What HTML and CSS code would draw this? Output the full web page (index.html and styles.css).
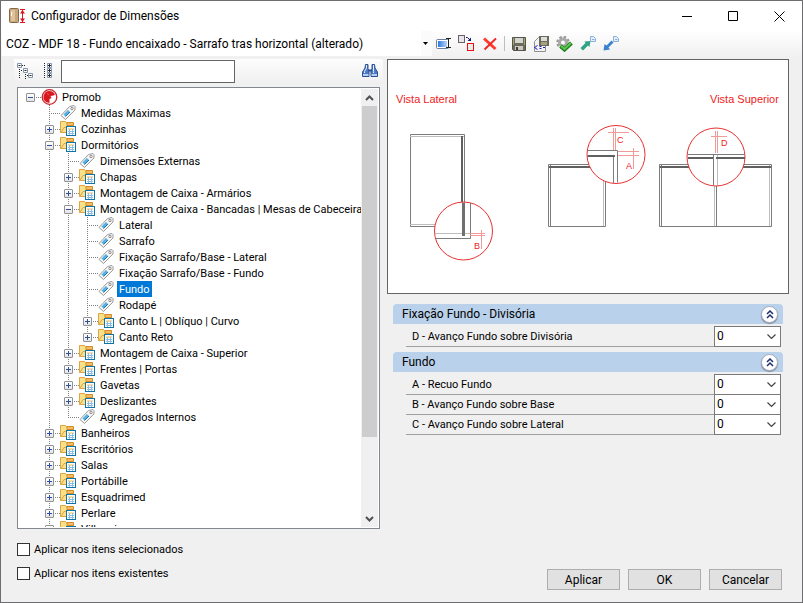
FILE: index.html
```html
<!DOCTYPE html>
<html lang="pt-BR">
<head>
  <meta charset="UTF-8">
  <title>Configurador de Dimensões</title>
  <link rel="stylesheet" href="styles.css">
</head>
<body>
  <svg class="sprites" aria-hidden="true">
    <symbol id="i-folder" viewBox="0 0 17 16">
      <path d="M0.500 11.500V0.500H5.500L7 2.500H13.500V11.500Z" fill="#fbe08a" stroke="#dca545"/>
      <path d="M7 1.500H13.500V4.500H7Z" fill="#f3bd62" stroke="#d08c2c"/>
      <path d="M1 11.500L4 6.500H8" fill="none" stroke="#dca545"/>
      <rect x="6.500" y="5.500" width="9" height="9" fill="#fff" stroke="#0f75a8"/>
      <path d="M8 8H14" stroke="#f5b95a"/>
      <path d="M8 10.500H14M8 12.500H14M9.500 8V14M12.500 8V14" stroke="#8dbce4"/>
    </symbol>
    <symbol id="i-tag" viewBox="0 0 17 16">
      <path d="M1 10.500L9.500 1.500L14 0.500L15 1.500V5L5.500 14.500Z" fill="#f6f6f6" stroke="#9a9a9a"/>
      <path d="M4.500 10.500L9 6" stroke="#56b0e4" stroke-width="3"/>
      <path d="M5.500 11.500L10 7" stroke="#1c78b4"/>
      <circle cx="12" cy="3.500" r="1.200" fill="#fff" stroke="#8a8a8a"/>
    </symbol>
    <symbol id="i-promob" viewBox="0 0 17 16">
      <circle cx="8.500" cy="8" r="7.300" fill="#fff" stroke="#cf1f28" stroke-width="1.300"/>
      <path d="M8.500 2A6 6 0 0 0 5.500 13.200L8.500 14V10L10.500 9L9.500 7L12.500 6.500L14 5.500A6 6 0 0 0 8.500 2Z" fill="#d71921"/>
      <path d="M6.500 4.500L7.500 6" fill="none" stroke="#ec6b70"/>
    </symbol>
  </svg>

  <div class="window">
    <header class="titlebar">
      <svg class="app-icon" width="17" height="16" viewBox="0 0 17 16" aria-hidden="true">
        <rect x="0.500" y="0.500" width="9" height="14" rx="1" fill="#c9a57a" stroke="#84684a"/>
        <rect x="2" y="2" width="4" height="11" fill="#dfc39d"/>
        <path d="M2.500 4V8" stroke="#fff"/>
        <path d="M11 1.500H16M11 14.500H16M13.500 2V14" stroke="#d8141c"/>
        <path d="M13.500 2L16 5.500H11ZM13.500 14L16 10.500H11Z" fill="#d8141c"/>
      </svg>
      <h1>Configurador de Dimensões</h1>
      <button class="win-btn" aria-label="Minimizar"><svg width="11" height="11"><path d="M0 5.500H10"/></svg></button>
      <button class="win-btn" aria-label="Maximizar"><svg width="11" height="11"><path d="M0.500 0.500H9.500V9.500H0.500Z"/></svg></button>
      <button class="win-btn" aria-label="Fechar"><svg width="11" height="11"><path d="M0.500 0.500L10.500 10.500M10.500 0.500L0.500 10.500"/></svg></button>
    </header>

    <div class="toolbar">
      <select class="config-select" aria-label="Configuração">
        <option>COZ - MDF 18 - Fundo encaixado - Sarrafo tras horizontal (alterado)</option>
      </select>
      <button class="tool" aria-label="Renomear">
        <svg width="16" height="16">
          <defs><linearGradient id="g-blue"><stop offset="0" stop-color="#2f77e0"/><stop offset="1" stop-color="#b9d4fb"/></linearGradient></defs>
          <rect x="0.500" y="3.500" width="12" height="9" rx="1" fill="#fff" stroke="#6c7f9c"/>
          <rect x="2" y="5" width="9" height="6" fill="url(#g-blue)"/>
          <path d="M10 2.500H15M10 11.500H15M12.500 3V11" stroke="#222" fill="none"/>
        </svg>
      </button>
      <button class="tool" aria-label="Duplicar">
        <svg width="17" height="17">
          <rect x="0.500" y="0.500" width="6" height="7" fill="#e6e6ec" stroke="#6d5f66"/>
          <path d="M8 2.500H9.500L12 5" stroke="#14206e" fill="none"/>
          <path d="M13 2.500V6H9.500Z" fill="#14206e"/>
          <rect x="9.500" y="8.500" width="6" height="7" fill="#e8ecec" stroke="#f00d12"/>
        </svg>
      </button>
      <button class="tool" aria-label="Excluir">
        <svg width="16" height="16"><path d="M2 2.500L13.500 13" stroke="#ff3b30" stroke-width="3"/><path d="M14 2.500L2.500 13.500" stroke="#ee2a24" stroke-width="2"/></svg>
      </button>
      <span class="separator"></span>
      <button class="tool" aria-label="Salvar">
        <svg width="16" height="16">
          <path d="M1.500 1.500H14.500V14.500H2.500L1.500 13.500Z" fill="#6c6a5c" stroke="#55544a"/>
          <rect x="4" y="2" width="8" height="5" fill="#d3d7d0"/>
          <path d="M2.500 2V9M13.500 2V9" stroke="#aaa46c"/>
          <rect x="4" y="10" width="8" height="4" fill="#c9c9c1"/>
          <rect x="5" y="11" width="2" height="3" fill="#3c3b35"/>
        </svg>
      </button>
      <button class="tool" aria-label="Salvar como">
        <svg width="17" height="16">
          <path d="M1.500 15.500V5.500L5.500 1.500H12.500V15.500Z" fill="#f4f4f4" stroke="#8f8f8f"/>
          <rect x="6" y="0" width="10" height="10" fill="#6c6a5c"/>
          <rect x="8" y="1" width="6" height="4" fill="#dcdfd8"/>
          <rect x="8" y="6" width="6" height="3" fill="#a7a37c"/>
          <path d="M4.500 9.500L1.500 11.500L4.500 13.500M6.500 10.500H8.500M6.500 12.500H8.500M10 11.500H12" fill="none" stroke="#1a1ad0"/>
        </svg>
      </button>
      <button class="tool" aria-label="Validar">
        <svg width="17" height="16">
          <circle cx="7" cy="6.500" r="5.500" fill="none" stroke="#979797" stroke-width="2.400" stroke-dasharray="2.400 1.920"/>
          <circle cx="7" cy="6.500" r="3.500" fill="#fff" stroke="#a9a9a9" stroke-width="3"/>
          <path d="M4.500 10L8.500 13.500L15.500 7" fill="none" stroke="#227a22" stroke-width="4"/>
          <path d="M5 10L8.500 13L15 7" fill="none" stroke="#58cd48" stroke-width="2"/>
        </svg>
      </button>
      <button class="tool" aria-label="Exportar">
        <svg width="16" height="16">
          <path d="M0.500 12L5.500 7L4.500 5.500L10.500 5L9.500 11L8 9.500L3 14.500Z" fill="#2fa384"/>
          <path d="M10.500 0.500H13.500L15.500 2.500V5.500H10.500Z" fill="#e3effc" stroke="#8ab1dd"/>
          <path d="M12 3.500H14.500" stroke="#8ab1dd"/>
        </svg>
      </button>
      <button class="tool" aria-label="Importar">
        <svg width="16" height="16">
          <path d="M10.500 6.500L5.500 11.500L7 13.500L0.500 14.500L1.500 8L3.500 9.500L8.500 4.500Z" fill="#3a82cf"/>
          <path d="M10.500 0.500H13.500L15.500 2.500V5.500H10.500Z" fill="#e3effc" stroke="#8ab1dd"/>
          <path d="M12 3.500H14.500" stroke="#8ab1dd"/>
        </svg>
      </button>
    </div>

    <main class="content">
      <section class="left">
        <div class="tree-tools">
          <button class="tree-tool" aria-label="Recolher tudo">
            <svg width="16" height="16">
              <path d="M2.500 4V16M8.500 9V16" stroke="#222" stroke-dasharray="1 1"/>
              <path d="M5 2.500H8M4 7.500H6M10 12.500H11" stroke="#222" stroke-dasharray="1 1"/>
              <path d="M0.500 0.500H4.500V4.500H0.500ZM6.500 5.500H10.500V9.500H6.500ZM11.500 10.500H15.500V14.500H11.500Z" fill="#fff" stroke="#8797ab"/>
              <path d="M1.500 2.500H3.500M7.500 7.500H9.500M12.500 12.500H14.500" stroke="#223"/>
            </svg>
          </button>
          <button class="tree-tool" aria-label="Expandir tudo">
            <svg width="10" height="16">
              <path d="M1.500 0V16M6.500 0V16" stroke="#222" stroke-dasharray="1 1"/>
              <path d="M4.500 0.500H8.500V4.500H4.500ZM4.500 5.500H8.500V9.500H4.500ZM4.500 10.500H8.500V14.500H4.500Z" fill="#fff" stroke="#8797ab"/>
              <path d="M5 2.500H8M5 7.500H8M5 12.500H8M6.500 1V4M6.500 6V9M6.500 11V14" stroke="#223"/>
            </svg>
          </button>
          <input type="text" class="search" aria-label="Pesquisar">
          <button class="tree-tool find" aria-label="Localizar">
            <svg width="16" height="14">
              <path d="M3.500 0.500H6V4.500L7 7V12.500H0.500V8L3 4Z" fill="#4f7bc0" stroke="#2c5096"/>
              <path d="M12.500 0.500H10V4.500L9 7V12.500H15.500V8L13 4Z" fill="#4f7bc0" stroke="#2c5096"/>
              <path d="M6.500 6.500H9.500" stroke="#2c5096" stroke-width="2"/>
              <path d="M4.500 1V4L2.500 7.500V9M11.500 1V4L11.500 7.500V9" stroke="#e4effc" fill="none"/>
              <path d="M1 11H6.500M9.500 11H15" stroke="#b4cdf0" stroke-width="2"/>
            </svg>
          </button>
        </div>

        <div class="tree-box">
          <ul class="tree">
            <li>
              <div class="row"><span class="toggle open"></span><svg class="icon root"><use href="#i-promob"/></svg><span class="label">Promob</span></div>
              <ul>
                <li><div class="row"><span class="toggle none"></span><svg class="icon"><use href="#i-tag"/></svg><span class="label">Medidas Máximas</span></div></li>
                <li><div class="row"><span class="toggle"></span><svg class="icon"><use href="#i-folder"/></svg><span class="label">Cozinhas</span></div></li>
                <li>
                  <div class="row"><span class="toggle open"></span><svg class="icon"><use href="#i-folder"/></svg><span class="label">Dormitórios</span></div>
                  <ul>
                    <li><div class="row"><span class="toggle none"></span><svg class="icon"><use href="#i-tag"/></svg><span class="label">Dimensões Externas</span></div></li>
                    <li><div class="row"><span class="toggle"></span><svg class="icon"><use href="#i-folder"/></svg><span class="label">Chapas</span></div></li>
                    <li><div class="row"><span class="toggle"></span><svg class="icon"><use href="#i-folder"/></svg><span class="label">Montagem de Caixa - Armários</span></div></li>
                    <li>
                      <div class="row"><span class="toggle open"></span><svg class="icon"><use href="#i-folder"/></svg><span class="label">Montagem de Caixa - Bancadas | Mesas de Cabeceira</span></div>
                      <ul>
                        <li><div class="row"><span class="toggle none"></span><svg class="icon"><use href="#i-tag"/></svg><span class="label">Lateral</span></div></li>
                        <li><div class="row"><span class="toggle none"></span><svg class="icon"><use href="#i-tag"/></svg><span class="label">Sarrafo</span></div></li>
                        <li><div class="row"><span class="toggle none"></span><svg class="icon"><use href="#i-tag"/></svg><span class="label">Fixação Sarrafo/Base - Lateral</span></div></li>
                        <li><div class="row"><span class="toggle none"></span><svg class="icon"><use href="#i-tag"/></svg><span class="label">Fixação Sarrafo/Base - Fundo</span></div></li>
                        <li><div class="row"><span class="toggle none"></span><svg class="icon"><use href="#i-tag"/></svg><span class="label selected">Fundo</span></div></li>
                        <li><div class="row"><span class="toggle none"></span><svg class="icon"><use href="#i-tag"/></svg><span class="label">Rodapé</span></div></li>
                        <li><div class="row"><span class="toggle"></span><svg class="icon"><use href="#i-folder"/></svg><span class="label">Canto L | Oblíquo | Curvo</span></div></li>
                        <li><div class="row"><span class="toggle"></span><svg class="icon"><use href="#i-folder"/></svg><span class="label">Canto Reto</span></div></li>
                      </ul>
                    </li>
                    <li><div class="row"><span class="toggle"></span><svg class="icon"><use href="#i-folder"/></svg><span class="label">Montagem de Caixa - Superior</span></div></li>
                    <li><div class="row"><span class="toggle"></span><svg class="icon"><use href="#i-folder"/></svg><span class="label">Frentes | Portas</span></div></li>
                    <li><div class="row"><span class="toggle"></span><svg class="icon"><use href="#i-folder"/></svg><span class="label">Gavetas</span></div></li>
                    <li><div class="row"><span class="toggle"></span><svg class="icon"><use href="#i-folder"/></svg><span class="label">Deslizantes</span></div></li>
                    <li><div class="row"><span class="toggle none"></span><svg class="icon"><use href="#i-tag"/></svg><span class="label">Agregados Internos</span></div></li>
                  </ul>
                </li>
                <li><div class="row"><span class="toggle"></span><svg class="icon"><use href="#i-folder"/></svg><span class="label">Banheiros</span></div></li>
                <li><div class="row"><span class="toggle"></span><svg class="icon"><use href="#i-folder"/></svg><span class="label">Escritórios</span></div></li>
                <li><div class="row"><span class="toggle"></span><svg class="icon"><use href="#i-folder"/></svg><span class="label">Salas</span></div></li>
                <li><div class="row"><span class="toggle"></span><svg class="icon"><use href="#i-folder"/></svg><span class="label">Portábille</span></div></li>
                <li><div class="row"><span class="toggle"></span><svg class="icon"><use href="#i-folder"/></svg><span class="label">Esquadrimed</span></div></li>
                <li><div class="row"><span class="toggle"></span><svg class="icon"><use href="#i-folder"/></svg><span class="label">Perlare</span></div></li>
                <li><div class="row"><span class="toggle"></span><svg class="icon"><use href="#i-folder"/></svg><span class="label">Villaggio</span></div></li>
              </ul>
            </li>
          </ul>
          <div class="scrollbar">
            <button class="scroll-btn" aria-label="Rolar para cima"><svg width="9" height="6"><path d="M1 5L4.500 1.500L8 5"/></svg></button>
            <div class="track"><div class="thumb"></div></div>
            <button class="scroll-btn" aria-label="Rolar para baixo"><svg width="9" height="6"><path d="M1 1L4.500 4.500L8 1"/></svg></button>
          </div>
        </div>
      </section>

      <section class="right">
        <div class="preview">
          <svg viewBox="0 0 400 233" role="img" aria-label="Vista lateral e superior">
            <g class="caption">
              <text x="8" y="43">Vista Lateral</text>
              <text x="322" y="43">Vista Superior</text>
            </g>

            <!-- vista lateral -->
            <path class="body" d="M22.500 74.500H76.500V166.500H22.500Z"/>
            <path class="thin" d="M22 76.500H76M22 164.500H76"/>
            <path class="panel" d="M74 76V142"/>
            <circle class="lens" cx="75.500" cy="171" r="29"/>
            <path class="thin" d="M47 173.500H82"/>
            <path class="body" d="M48 178.500H82.500V143"/>
            <path class="panel wide" d="M75.500 142.500V176"/>
            <path class="mark" d="M82 173.500H97M82 175.500H97M93.500 170V189"/>
            <text class="letter" x="86" y="189">B</text>

            <!-- vista superior, lateral -->
            <path class="body" d="M160.500 104.500H217.500V166.500H160.500ZM162.500 105V166"/>
            <path class="thin" d="M215.500 105V166"/>
            <path class="panel" d="M161 107H215"/>
            <circle class="lens" cx="228" cy="94.500" r="29"/>
            <path class="body" d="M200 90.500H229.500V122.500M225.500 97V123"/>
            <path class="panel" d="M199.500 96H227"/>
            <path class="mark" d="M225.500 68V90M227.500 68V90M220 72.500H241M230 91.500H251M230 95.500H251M245.500 88V109"/>
            <text class="letter" x="229" y="83">C</text>
            <text class="letter" x="238" y="109">A</text>

            <!-- vista superior, divisória -->
            <path class="body" d="M271.500 104.500H383.500V166.500H271.500ZM273.500 105V166M328.500 126V166"/>
            <path class="thin" d="M326.500 126V166M381.500 105V166"/>
            <path class="panel" d="M272 107H383"/>
            <circle class="lens" cx="328" cy="97" r="29"/>
            <path class="body" d="M300 94.500H356M325.500 95V125"/>
            <path class="thin" d="M329.500 95V125"/>
            <path class="panel" d="M300 98H325M328 98H357"/>
            <path class="mark" d="M327.500 71V93M329.500 71V93M323 76.500H339"/>
            <text class="letter" x="333" y="86">D</text>
          </svg>
        </div>

        <div class="properties">
          <section class="group">
            <div class="group-head">
              <h2>Fixação Fundo - Divisória</h2>
              <button class="collapse" aria-label="Recolher Fixação Fundo - Divisória"><svg width="8" height="9"><path d="M1 4L4 1L7 4M1 8L4 5L7 8"/></svg></button>
            </div>
            <div class="field">
              <label for="dim-d">D - Avanço Fundo sobre Divisória</label>
              <select id="dim-d"><option>0</option></select>
            </div>
          </section>
          <section class="group">
            <div class="group-head">
              <h2>Fundo</h2>
              <button class="collapse" aria-label="Recolher Fundo"><svg width="8" height="9"><path d="M1 4L4 1L7 4M1 8L4 5L7 8"/></svg></button>
            </div>
            <div class="field">
              <label for="dim-a">A - Recuo Fundo</label>
              <select id="dim-a"><option>0</option></select>
            </div>
            <div class="field">
              <label for="dim-b">B - Avanço Fundo sobre Base</label>
              <select id="dim-b"><option>0</option></select>
            </div>
            <div class="field">
              <label for="dim-c">C - Avanço Fundo sobre Lateral</label>
              <select id="dim-c"><option>0</option></select>
            </div>
          </section>
        </div>
      </section>
    </main>

    <footer class="footer">
      <div class="options">
        <label><input type="checkbox"> Aplicar nos itens selecionados</label>
        <label><input type="checkbox"> Aplicar nos itens existentes</label>
      </div>
      <div class="actions">
        <button class="btn">Aplicar</button>
        <button class="btn">OK</button>
        <button class="btn">Cancelar</button>
      </div>
    </footer>
  </div>
</body>
</html>
```

FILE: styles.css
```css
* {
  box-sizing: border-box;
}

body {
  margin: 0;
  font-family: Roboto, "Liberation Sans", sans-serif;
  font-size: 11px;
  color: #000;
}

button, select, input {
  font: inherit;
  color: inherit;
}

.sprites {
  display: none;
}

.window {
  display: flex;
  flex-direction: column;
  height: 100vh;
  border: 1px solid #6d6d6f;
  background: #f0f0f0;
}

/* title bar */
.titlebar {
  display: flex;
  align-items: center;
  height: 30px;
  padding-left: 8px;
  background: #fff;
}

.titlebar h1 {
  flex: 1;
  margin: 0 0 0 5px;
  font-size: 12px;
  font-weight: normal;
}

.win-btn {
  display: flex;
  align-items: center;
  justify-content: center;
  width: 46px;
  height: 30px;
  padding: 0;
  border: none;
  background: none;
}

.win-btn svg {
  fill: none;
  stroke: #000;
}

/* toolbar */
.toolbar {
  display: flex;
  align-items: center;
  height: 27px;
  padding: 0 0 2px 1px;
  background: linear-gradient(#fefefe, #f0f0f0);
}

.config-select {
  appearance: none;
  width: 430px;
  height: 25px;
  padding: 0 16px 0 4px;
  border: none;
  border-radius: 0;
  font-size: 12px;
  background: url("data:image/svg+xml,%3Csvg xmlns='http://www.w3.org/2000/svg' width='5' height='3'%3E%3Cpath d='M0 0h5L2.500 3z'/%3E%3C/svg%3E") no-repeat right 4px center, linear-gradient(#fbfbfb, #fbfbfb) no-repeat right / 11px 100%, #fff;
}

.tool {
  display: flex;
  align-items: center;
  justify-content: center;
  width: 23px;
  height: 22px;
  padding: 0;
  border: none;
  background: none;
}

.tool svg {
  flex: none;
}

.separator {
  width: 1px;
  height: 15px;
  margin: 0 2px 0 3px;
  background: #bdbdbd;
}

/* main area */
.content {
  display: grid;
  grid-template-columns: 363px 1fr;
  grid-template-rows: minmax(0, 1fr);
  gap: 7px;
  flex: 1;
  min-height: 0;
  padding: 1px 13px 0 16px;
}

.left {
  display: flex;
  flex-direction: column;
  gap: 4px;
}

.tree-tools {
  display: flex;
  align-items: center;
  height: 24px;
  margin: 0 -3px;
  padding: 0 5px 0 3px;
  border-radius: 0 3px 3px 0;
  background: linear-gradient(#fdfdfd, #f0f0f0);
}

.tree-tool {
  display: flex;
  align-items: center;
  justify-content: center;
  width: 22px;
  height: 22px;
  padding: 0;
  border: none;
  background: none;
}

.tree-tool:first-child {
  width: 16px;
  margin-right: 4px;
}

.search {
  width: 174px;
  height: 23px;
  margin-left: 2px;
  padding: 2px 4px;
  border: 1px solid #646464;
  background: #fff;
}

.tree-tool.find {
  width: 16px;
  margin-left: auto;
}

.tree-box {
  display: flex;
  flex: 1;
  min-height: 0;
  padding: 1px;
  border: 1px solid #828790;
  background: #fff;
}

.tree {
  flex: 1;
  margin: 0;
  padding: 0 0 0 2px;
  overflow: hidden;
}

.tree, .tree ul {
  list-style: none;
}

.tree ul {
  margin: 0;
  padding: 0 0 0 19px;
}

.tree li li {
  background: repeating-linear-gradient(#808080 0 1px, transparent 1px 2px) no-repeat 9px 0 / 1px 100%;
}

.tree li li:last-child {
  background-size: 1px 8px;
}

.row {
  display: flex;
  align-items: center;
  height: 16px;
  background: repeating-linear-gradient(to right, #808080 0 1px, transparent 1px 2px) no-repeat 9px 8px / 12px 1px;
}

.toggle {
  flex: none;
  width: 9px;
  height: 9px;
  margin: 0 5px;
  border: 1px solid #919191;
  border-radius: 1px;
  background:
    linear-gradient(#2f4f9c, #2f4f9c) no-repeat center / 5px 1px,
    linear-gradient(#2f4f9c, #2f4f9c) no-repeat center / 1px 5px,
    linear-gradient(#fff, #e4e4e4);
}

.toggle.open {
  background:
    linear-gradient(#2f4f9c, #2f4f9c) no-repeat center / 5px 1px,
    linear-gradient(#fff, #e4e4e4);
}

.toggle.none {
  visibility: hidden;
}

.icon {
  flex: none;
  width: 17px;
  height: 16px;
  margin: 0 1px;
}

.label {
  height: 16px;
  margin-left: 1px;
  padding: 1px 2px 0;
  line-height: 16px;
  white-space: nowrap;
}

.label.selected {
  background: #0078d7;
  color: #fff;
}

.scrollbar {
  display: flex;
  flex: none;
  flex-direction: column;
  width: 17px;
  background: #f0f0f0;
}

.scroll-btn {
  display: flex;
  align-items: center;
  justify-content: center;
  height: 17px;
  padding: 0;
  border: none;
  background: none;
}

.scroll-btn svg {
  fill: none;
  stroke: #505050;
  stroke-width: 2;
}

.track {
  flex: 1;
}

.thumb {
  width: 15px;
  height: 82%;
  margin: 0 1px;
  background: #cdcdcd;
}

/* drawing */
.preview {
  border: 1px solid #646464;
  background: #fff;
}

.preview svg {
  display: block;
  width: 100%;
  fill: none;
}

.caption text, .letter {
  font-family: "Liberation Sans", Arial, sans-serif;
  font-size: 11px;
  fill: #ee1c1c;
}

.letter {
  font-size: 9px;
}

.body {
  stroke: #7c7c7c;
}

.thin {
  stroke: #bdbdbd;
}

.panel {
  stroke: #606060;
  stroke-width: 2;
}

.panel.wide {
  stroke: #707070;
  stroke-width: 3;
}

.lens {
  fill: #fff;
  stroke: #e83030;
}

.mark {
  stroke: #f09a9a;
}

/* dimension groups */
.properties {
  display: flex;
  flex-direction: column;
  gap: 5px;
  padding: 10px 6px 0;
}

.group-head {
  display: flex;
  align-items: center;
  justify-content: space-between;
  height: 20px;
  margin-bottom: 3px;
  padding: 0 5px 0 9px;
  border-radius: 4px 4px 0 0;
  background: #b9d1ea;
}

.group-head h2 {
  margin: 0;
  font-size: 12px;
  font-weight: normal;
}

.collapse {
  display: flex;
  align-items: center;
  justify-content: center;
  width: 17px;
  height: 17px;
  padding: 0;
  border: 1px solid #a5adc0;
  border-radius: 50%;
  background: #fff;
  box-shadow: 0 1px 1px #7d8797;
}

.collapse svg {
  fill: none;
  stroke: #1d2f6f;
  stroke-width: 1.5;
}

.field {
  display: flex;
  align-items: flex-end;
  height: 20px;
  margin: 0 2px 0 13px;
  border-bottom: 1px solid #a0a0a0;
}

.field label {
  flex: 1;
  padding-left: 6px;
  line-height: 18px;
}

.field select {
  appearance: none;
  width: 67px;
  height: 21px;
  margin-bottom: -1px;
  padding: 0 2px 1px;
  border: 1px solid #7a7a7a;
  border-radius: 0;
  font-size: 12px;
  background: #fff url("data:image/svg+xml,%3Csvg xmlns='http://www.w3.org/2000/svg' width='9' height='6'%3E%3Cpath d='M.5 .5l4 4 4-4' fill='none' stroke='%23444' stroke-width='1.2'/%3E%3C/svg%3E") no-repeat right 4px center;
}

/* footer */
.footer {
  display: flex;
  align-items: flex-end;
  justify-content: space-between;
  padding: 12px 20px 12px 16px;
}

.options {
  display: flex;
  flex-direction: column;
  gap: 8px;
  padding-bottom: 9px;
}

.options label {
  display: flex;
  align-items: center;
  gap: 4px;
  height: 16px;
}

.options input {
  appearance: none;
  width: 13px;
  height: 13px;
  margin: 0;
  border: 1px solid #333;
  background: #fff;
}

.actions {
  display: flex;
  gap: 8px;
}

.btn {
  width: 73px;
  height: 21px;
  padding: 0;
  border: 1px solid #adadad;
  background: #e1e1e1;
  font-size: 12px;
}
```
